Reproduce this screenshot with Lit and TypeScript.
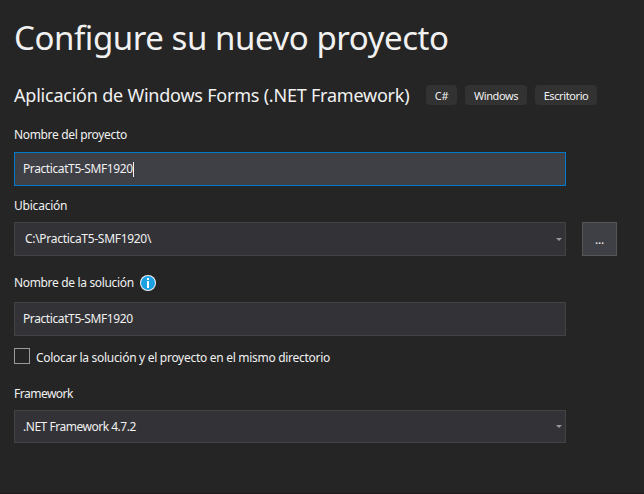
import { LitElement, html, css } from "lit";
import { customElement } from "lit/decorators.js";

const arrow = html`<svg class="arrow" width="6" height="3" viewBox="0 0 6 3"><path d="M0 0h6L3 3z" fill="#999" /></svg>`;

@customElement("app-root")
export class AppRoot extends LitElement {
  static styles = css`
    :host {
      display: block;
      box-sizing: border-box;
      width: 644px;
      height: 494px;
      overflow: hidden;
      padding: 16px 27px 0 14px;
      background: #252525;
      border-bottom: 1px solid #1f1a1d;
      color: #f1f1f1;
      font: 12px/16px "Noto Sans", "Open Sans", sans-serif;
      letter-spacing: -0.29px;
      white-space: nowrap;
    }
    h1, h2 { margin: 0; font-weight: 400; }
    h1 { font-size: 33px; line-height: 44px; height: 44px; letter-spacing: -0.44px; }
    h2 { font-size: 18px; line-height: 24px; width: 412px; letter-spacing: -0.22px; }
    .kind { display: flex; align-items: center; height: 24px; margin-top: 23px; }
    .tags { display: flex; gap: 8px; }
    .tag {
      box-sizing: border-box; height: 20px; border-radius: 4px; background: #323232;
      font-size: 11px; line-height: 22px; text-align: center; letter-spacing: -0.4px;
    }
    .t1 { width: 31px; }
    .t2, .t3 { width: 62px; }
    .label { display: flex; align-items: center; height: 16px; }
    .l1 { margin: 20px 0 9px; letter-spacing: -0.34px; }
    .l2 { margin: 12px 0 8px; letter-spacing: -0.22px; }
    .l3 { margin: 19px 0 11px; letter-spacing: -0.34px; }
    .l4 { margin: 22px 0 8px; letter-spacing: -0.5px; }
    .field {
      box-sizing: border-box; width: 552px; height: 34px; padding: 0 3px 0 8px;
      display: flex; align-items: center;
      background: #333337; border: 1px solid #434346;
      letter-spacing: -0.4px;
    }
    .focus { background: #3f3f46; border-color: #007acc; }
    .path { padding-left: 10px; letter-spacing: -0.3px; }
    .short { height: 33px; letter-spacing: -0.48px; }
    .arrow { margin-left: auto; }
    .caret { width: 1px; height: 15px; background: #f1f1f1; }
    .row { display: flex; gap: 16px; }
    .browse {
      box-sizing: border-box; width: 35px; height: 34px; background: #3f3f46;
      border: 1px solid #555; text-align: center; line-height: 34px;
    }
    .info { margin-left: 6px; }
    .check { display: flex; align-items: center; gap: 6px; height: 16px; margin-top: 12px; }
    .check span { padding-top: 3px; }
    .box { box-sizing: border-box; width: 16px; height: 16px; border: 1px solid #999; background: #252526; }
  `;

  render() {
    return html`
      <h1><span>Configure su nuevo proyecto</span></h1>
      <div class="kind">
        <h2><span>Aplicación de Windows Forms (.NET Framework)</span></h2>
        <div class="tags">
          <span class="tag t1">C#</span><span class="tag t2">Windows</span><span class="tag t3">Escritorio</span>
        </div>
      </div>
      <div class="label l1"><span>Nombre del proyecto</span></div>
      <div class="field focus"><span>PracticatT5-SMF1920</span><i class="caret"></i></div>
      <div class="label l2"><span>Ubicación</span></div>
      <div class="row">
        <div class="field path"><span>C:\\PracticaT5-SMF1920\\</span>${arrow}</div>
        <div class="browse">...</div>
      </div>
      <div class="label l3">
        <span>Nombre de la solución</span>
        <svg class="info" width="16" height="16" viewBox="0 0 16 16">
          <circle cx="8" cy="8" r="8" fill="#f6f6f6" /><circle cx="8" cy="8" r="7" fill="#1ba1e2" />
          <path d="M7 3h2v2H7zM7 6h2v7H7z" fill="#fff" />
        </svg>
      </div>
      <div class="field"><span>PracticatT5-SMF1920</span></div>
      <div class="check"><i class="box"></i><span>Colocar la solución y el proyecto en el mismo directorio</span></div>
      <div class="label l4"><span>Framework</span></div>
      <div class="field short"><span>.NET Framework 4.7.2</span>${arrow}</div>
    `;
  }
}
